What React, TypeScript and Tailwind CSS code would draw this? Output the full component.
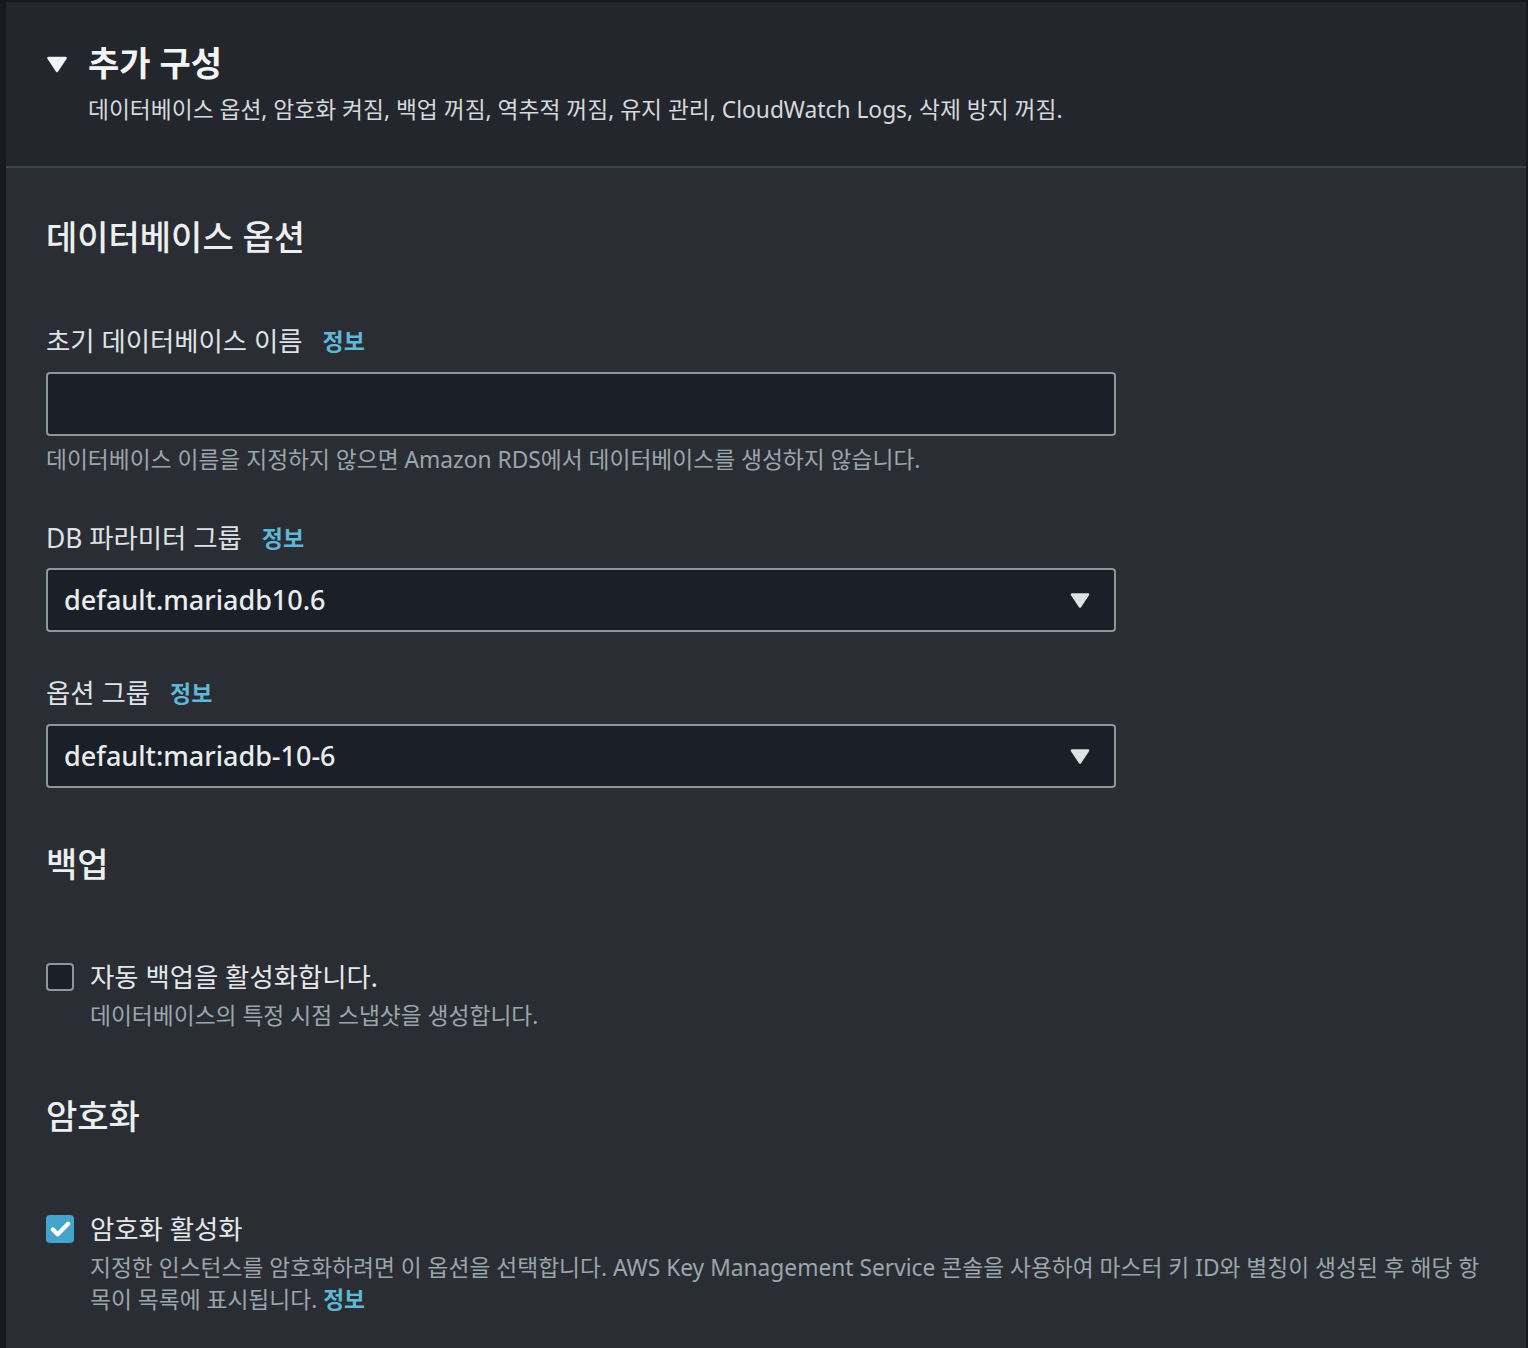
import { Check } from "lucide-react"

const font = { fontFamily: '"Noto Sans", "Noto Sans CJK KR", sans-serif' }

function Caret({ className }: { className?: string }) {
  return (
    <svg viewBox="0 0 20 16" className={className}>
      <polygon points="2,2 18,2 10,14" fill="currentColor" stroke="currentColor" strokeWidth="2.5" strokeLinejoin="round" />
    </svg>
  )
}

function Info() {
  return <span className="text-[23px] leading-[32px] font-bold text-[#5fb8d8]">정보</span>
}

function Label({ text }: { text: string }) {
  return (
    <div className="flex items-center gap-[20px] h-[32px]">
      <span className="text-[26.4px] leading-[32px] text-[#dfe3e6]">{text}</span>
      <Info />
    </div>
  )
}

function Select({ value }: { value: string }) {
  return (
    <div className="w-[1070px] h-[64px] rounded-[4px] border-2 border-[#8d9699] bg-[#1b1f27] flex items-center justify-between pl-[16px] pr-[24px]">
      <span className="text-[27px] font-medium text-[#e9ecee]">{value}</span>
      <Caret className="w-[20px] h-[17px] text-[#dde2e4]" />
    </div>
  )
}

function Heading({ text, className }: { text: string; className?: string }) {
  return <h2 className={"text-[34px] leading-[40px] font-medium text-[#eceff0] " + (className ?? "")}>{text}</h2>
}

export default function App() {
  return (
    <div style={font} className="min-h-screen bg-[#16191f] pl-[6px] pt-[2px] pr-[2px]">
      <div className="bg-[#23262d] border-b-2 border-[#3f444b] pt-[41px] pb-[41px] pl-[40px] flex">
        <Caret className="w-[22px] h-[17px] mt-[13px] text-[#f2f3f3]" />
        <div className="ml-[20px]">
          <h1 className="text-[34px] leading-[40px] font-bold text-[#f2f3f3]">추가 구성</h1>
          <p className="mt-[12px] text-[22.75px] leading-[30px] text-[#d5dadd]">
            데이터베이스 옵션, 암호화 켜짐, 백업 꺼짐, 역추적 꺼짐, 유지 관리, CloudWatch Logs, 삭제 방지 꺼짐.
          </p>
        </div>
      </div>

      <div className="bg-[#2a2d33] pl-[40px] pr-[40px] pt-[49px] pb-[40px]">
        <Heading text="데이터베이스 옵션" />

        <div className="mt-[68px]">
          <Label text="초기 데이터베이스 이름" />
          <div className="mt-[15px] w-[1070px] h-[64px] rounded-[4px] border-2 border-[#8d9699] bg-[#1b1f27]" />
          <p className="mt-[9px] text-[22.75px] leading-[30px] text-[#9ba6ac]">
            데이터베이스 이름을 지정하지 않으면 Amazon RDS에서 데이터베이스를 생성하지 않습니다.
          </p>
        </div>

        <div className="mt-[47px]">
          <Label text="DB 파라미터 그룹" />
          <div className="mt-[14px]">
            <Select value="default.mariadb10.6" />
          </div>
        </div>

        <div className="mt-[45px]">
          <Label text="옵션 그룹" />
          <div className="mt-[15px]">
            <Select value="default:mariadb-10-6" />
          </div>
        </div>

        <Heading text="백업" className="mt-[56px]" />

        <div className="mt-[76px]">
          <div className="flex items-center gap-[16px] h-[34px]">
            <div className="w-[28px] h-[28px] rounded-[4px] border-2 border-[#8d9699] bg-[#1b1f27]" />
            <span className="text-[26.4px] leading-[34px] text-[#e5e8ea]">자동 백업을 활성화합니다.</span>
          </div>
          <p className="mt-[7px] pl-[44px] text-[22.75px] leading-[30px] text-[#9ba6ac]">
            데이터베이스의 특정 시점 스냅샷을 생성합니다.
          </p>
        </div>

        <Heading text="암호화" className="mt-[65px]" />

        <div className="mt-[76px]">
          <div className="flex items-center gap-[16px] h-[34px]">
            <div className="w-[28px] h-[28px] rounded-[4px] bg-[#44a4cb] flex items-center justify-center">
              <Check className="w-[23px] h-[23px] text-white" strokeWidth={4.5} />
            </div>
            <span className="text-[26.4px] leading-[34px] text-[#e5e8ea]">암호화 활성화</span>
          </div>
          <p className="mt-[6px] pl-[44px] text-[22.75px] leading-[32px] text-[#9ba6ac]">
            <span className="whitespace-nowrap">
              지정한 인스턴스를 암호화하려면 이 옵션을 선택합니다. AWS Key Management Service 콘솔을 사용하여 마스터 키 ID와 별칭이 생성된 후 해당 항
            </span>
            <br />
            목이 목록에 표시됩니다. <span className="font-bold text-[#5fb8d8]">정보</span>
          </p>
        </div>
      </div>
    </div>
  )
}
